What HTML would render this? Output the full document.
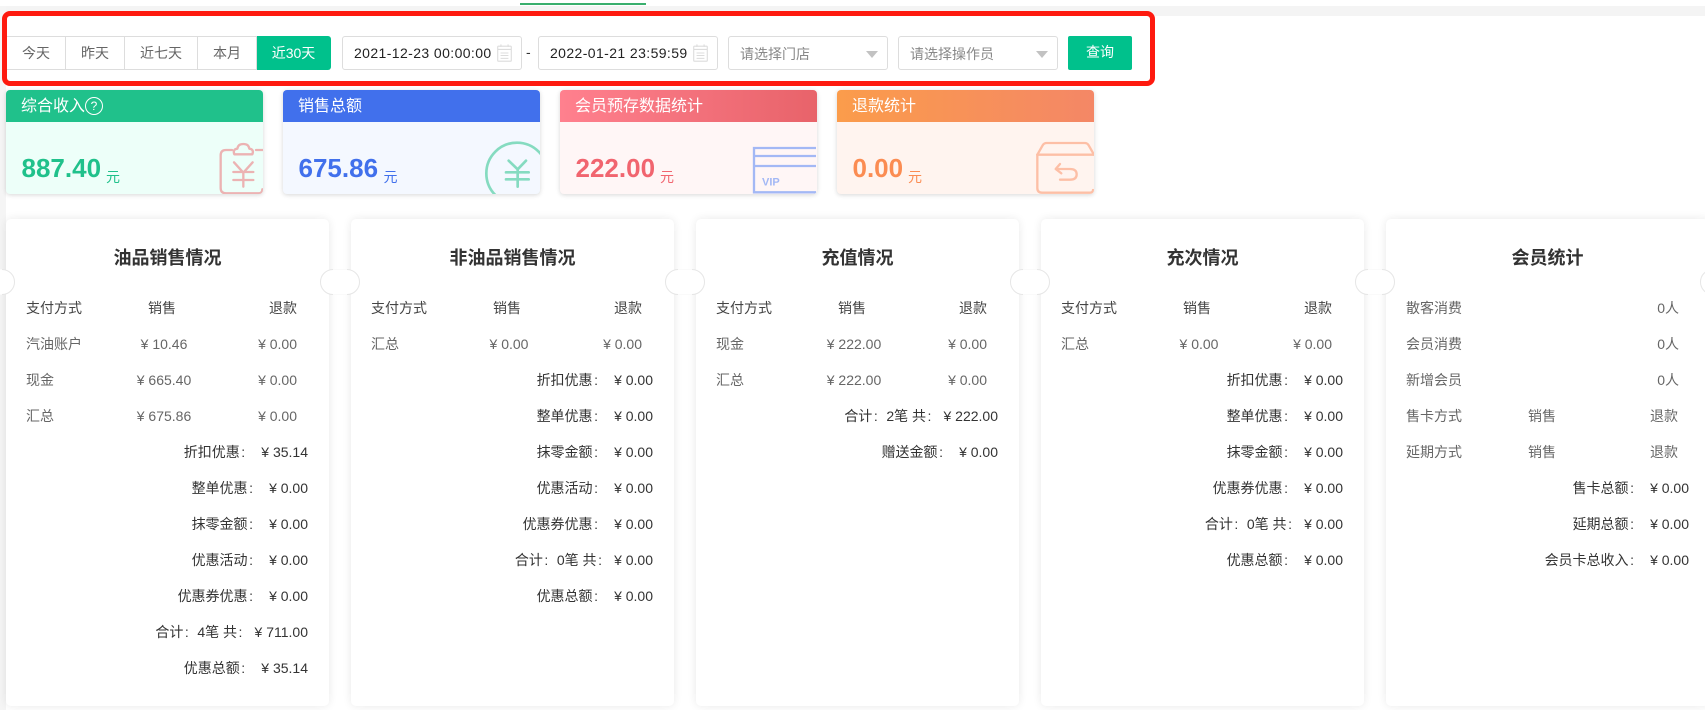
<!DOCTYPE html>
<html lang="zh-CN">
<head>
<meta charset="utf-8">
<title>统计</title>
<style>
html,body{margin:0;padding:0;background:#fff;}
body{position:relative;width:1705px;height:710px;overflow:hidden;font-family:"Liberation Sans","Noto Sans CJK SC",sans-serif;font-size:14px;color:#333;}
.abs,.stat,.card,.seg,.inp,.sel,.btn,.pill{position:absolute;box-sizing:border-box;}
.seg{top:36px;height:34px;line-height:32px;text-align:center;color:#666;background:#fff;border:1px solid #ddd;border-left:0;}
.seg.on{background:#00c18c;color:#fff;border-color:#00c18c;border-radius:0 3px 3px 0;}
.inp{top:36px;height:34px;width:180px;border:1px solid #ddd;border-radius:3px;background:#fff;line-height:32px;padding-left:11px;color:#222;letter-spacing:.4px;white-space:nowrap;}
.inp svg{position:absolute;right:9px;top:7px;width:15px;height:18px;}
.sel{top:36px;height:34px;width:160px;border:1px solid #ddd;border-radius:3px;background:#fff;line-height:34px;padding-left:11px;color:#888;}
.sel:after{content:"";position:absolute;right:9px;top:14px;width:0;height:0;border-left:6px solid transparent;border-right:6px solid transparent;border-top:7px solid #c2c2c2;}
.btn{left:1068px;top:36px;width:64px;height:34px;line-height:33px;text-align:center;background:#00c18c;color:#fff;border-radius:2px;}
.red{position:absolute;box-sizing:border-box;left:2px;top:11px;width:1153px;height:75px;border:5px solid #fe1a0f;border-radius:8px;background:transparent;}
.stat{top:90px;width:257px;height:104px;border-radius:4px;overflow:hidden;box-shadow:0 1px 5px rgba(0,0,0,.16);}
.stat .h{height:32px;line-height:34px;padding-left:15px;color:#fff;font-size:16px;white-space:nowrap;}
.stat .num{position:absolute;left:15.5px;top:63px;line-height:30px;font-size:26px;font-weight:bold;white-space:nowrap;}
.stat .yuan{position:absolute;top:80px;line-height:14px;font-size:14px;}
.stat svg{position:absolute;width:100px;height:70px;top:40px;}
.q{display:inline-block;box-sizing:border-box;width:18px;height:18px;border:1px solid #fff;border-radius:50%;font-size:12px;line-height:16px;text-align:center;vertical-align:1px;}
.card{top:219px;width:323px;height:487px;background:#fff;border-radius:5px;box-shadow:0 0 9px rgba(0,0,0,.09);}
.t{position:absolute;left:0;right:0;top:24px;line-height:30px;text-align:center;font-size:18px;font-weight:bold;color:#333;}
.rows{position:absolute;left:0;right:0;top:71px;}
.r{position:relative;height:36px;line-height:36px;white-space:nowrap;color:#666;}
.r span{position:absolute;}
.r .a{left:20px;}
.r .b2{left:95px;width:122px;text-align:center;}
.r .c{right:32px;}
.r.h3{color:#444;}
.r .v{left:97px;width:122px;text-align:center;}
.m{text-align:right;padding-right:21px;color:#333;}
.m i{display:inline-block;width:14px;padding-left:1.5px;box-sizing:border-box;text-align:left;font-style:normal;}
.m em{font-style:normal;margin-left:7.5px;}
.m em.n{margin-left:3.5px;}
.pill{top:269px;width:40px;height:26px;border:1px solid #e6e6e6;border-radius:13px;background:#fff;}
.pill:before,.pill:after{content:"";position:absolute;left:12px;width:14px;height:1px;background:rgba(255,255,255,.8);}
.pill:before{top:-1px;}
.pill:after{bottom:-1px;}
svg text{font-family:"Liberation Sans",sans-serif;font-weight:bold;}
</style>
</head>
<body>
<div class="abs" style="left:0;top:6px;width:1705px;height:10px;background:#f4f4f4"></div>
<div class="abs" style="left:0;top:6px;width:6px;height:704px;background:#f5f5f5"></div>
<div class="abs" style="left:520px;top:3px;width:126px;height:2px;background:#3aaf6e"></div>
<div class="abs" style="left:6px;top:16px;width:1150px;height:70px;background:#fff"></div>

<div class="seg" style="left:7px;width:59px">今天</div>
<div class="seg" style="left:66px;width:59px">昨天</div>
<div class="seg" style="left:125px;width:73px">近七天</div>
<div class="seg" style="left:198px;width:59px">本月</div>
<div class="seg on" style="left:257px;width:74px">近30天</div>

<div class="inp" style="left:342px">2021-12-23 00:00:00<svg viewBox="0 0 42 50"><g fill="none" stroke="#dcdcdc" stroke-width="3"><rect x="2" y="6" width="38" height="42" rx="2"/><path d="M11 1V8M31 1V8M2 15H40M10 25H32M10 32H32M10 40H32"/></g></svg></div>
<div class="abs" style="left:526px;top:36px;line-height:33px;color:#333">-</div>
<div class="inp" style="left:538px">2022-01-21 23:59:59<svg viewBox="0 0 42 50"><g fill="none" stroke="#dcdcdc" stroke-width="3"><rect x="2" y="6" width="38" height="42" rx="2"/><path d="M11 1V8M31 1V8M2 15H40M10 25H32M10 32H32M10 40H32"/></g></svg></div>
<div class="sel" style="left:728px">请选择门店</div>
<div class="sel" style="left:898px">请选择操作员</div>
<div class="btn">查询</div>
<div class="red"></div>

<div class="stat" style="left:6px;background:#edfff9">
  <div class="h" style="background:#20c18b">综合收入<span class="q">?</span></div>
  <div class="num" style="color:#20c18b">887.40</div>
  <div class="yuan" style="left:100px;color:#20c18b">元</div>
  <svg viewBox="0 0 300 210" style="left:194px"><g fill="none" stroke="#ecb3b3" stroke-width="7" stroke-linecap="round" stroke-linejoin="round"><path d="M96 60H78Q62 60 62 76V174Q62 190 78 190H176Q187 190 187 178"/><path d="M168 60H190"/><path d="M103 73Q97 58 112 56Q114 42 130 42Q146 42 148 56Q163 58 157 73Z"/><path d="M102 97L130 128L158 97M100 126H160M100 150H160M130 126V170"/></g></svg>
</div>
<div class="stat" style="left:283px;background:#f4f8ff">
  <div class="h" style="background:#4170ec">销售总额</div>
  <div class="num" style="color:#4170ec">675.86</div>
  <div class="yuan" style="left:100.5px;color:#4170ec">元</div>
  <svg viewBox="0 0 300 210" style="left:187px"><g fill="none" stroke="#85dbc0" stroke-width="8" stroke-linecap="round"><circle cx="141" cy="130" r="92"/><path d="M116 92L143 118L168 92M108 127H176M108 148H176M143 118V170"/></g></svg>
</div>
<div class="stat" style="left:560px;background:#fff6f6">
  <div class="h" style="background:linear-gradient(90deg,#ff808e,#e8636a)">会员预存数据统计</div>
  <div class="num" style="color:#f1656f">222.00</div>
  <div class="yuan" style="left:100px;color:#f1656f">元</div>
  <svg viewBox="0 0 300 210" style="left:180px"><g fill="none" stroke="#a3b8f5" stroke-width="7"><path d="M228 54H42V187H228M42 78H228M42 108H228"/></g><text x="66" y="167" font-size="33" fill="#a3b8f5">VIP</text></svg>
</div>
<div class="stat" style="left:837px;background:#fff4ef">
  <div class="h" style="background:linear-gradient(90deg,#fb9c4b,#f48766)">退款统计</div>
  <div class="num" style="color:#fb8c52">0.00</div>
  <div class="yuan" style="left:71px;color:#fb8c52">元</div>
  <svg viewBox="0 0 300 210" style="left:183px"><g fill="none" stroke="#fdbfa6" stroke-width="7" stroke-linecap="round" stroke-linejoin="round"><path d="M52 74L68 46Q72 39 80 39H194Q202 39 206 46L222 74"/><path d="M52 74H222"/><path d="M52 74V174Q52 188 66 188H210Q219 188 219 180"/><path d="M120 102L107 117L124 130M108 117H150Q170 117 170 133Q170 149 150 149H120"/></g></svg>
</div>

<div class="card" style="left:6px">
  <div class="t">油品销售情况</div>
  <div class="rows">
    <div class="r h3"><span class="a">支付方式</span><span class="b2">销售</span><span class="c">退款</span></div>
    <div class="r"><span class="a">汽油账户</span><span class="v">¥ 10.46</span><span class="c">¥ 0.00</span></div>
    <div class="r"><span class="a">现金</span><span class="v">¥ 665.40</span><span class="c">¥ 0.00</span></div>
    <div class="r"><span class="a">汇总</span><span class="v">¥ 675.86</span><span class="c">¥ 0.00</span></div>
    <div class="r m">折扣优惠<i>:</i><em>¥ 35.14</em></div>
    <div class="r m">整单优惠<i>:</i><em>¥ 0.00</em></div>
    <div class="r m">抹零金额<i>:</i><em>¥ 0.00</em></div>
    <div class="r m">优惠活动<i>:</i><em>¥ 0.00</em></div>
    <div class="r m">优惠券优惠<i>:</i><em>¥ 0.00</em></div>
    <div class="r m">合计<i>:</i>4笔 共<i>:</i><em class="n">¥ 711.00</em></div>
    <div class="r m">优惠总额<i>:</i><em>¥ 35.14</em></div>
  </div>
</div>
<div class="card" style="left:351px">
  <div class="t">非油品销售情况</div>
  <div class="rows">
    <div class="r h3"><span class="a">支付方式</span><span class="b2">销售</span><span class="c">退款</span></div>
    <div class="r"><span class="a">汇总</span><span class="v">¥ 0.00</span><span class="c">¥ 0.00</span></div>
    <div class="r m">折扣优惠<i>:</i><em>¥ 0.00</em></div>
    <div class="r m">整单优惠<i>:</i><em>¥ 0.00</em></div>
    <div class="r m">抹零金额<i>:</i><em>¥ 0.00</em></div>
    <div class="r m">优惠活动<i>:</i><em>¥ 0.00</em></div>
    <div class="r m">优惠券优惠<i>:</i><em>¥ 0.00</em></div>
    <div class="r m">合计<i>:</i>0笔 共<i>:</i><em class="n">¥ 0.00</em></div>
    <div class="r m">优惠总额<i>:</i><em>¥ 0.00</em></div>
  </div>
</div>
<div class="card" style="left:696px">
  <div class="t">充值情况</div>
  <div class="rows">
    <div class="r h3"><span class="a">支付方式</span><span class="b2">销售</span><span class="c">退款</span></div>
    <div class="r"><span class="a">现金</span><span class="v">¥ 222.00</span><span class="c">¥ 0.00</span></div>
    <div class="r"><span class="a">汇总</span><span class="v">¥ 222.00</span><span class="c">¥ 0.00</span></div>
    <div class="r m">合计<i>:</i>2笔 共<i>:</i><em class="n">¥ 222.00</em></div>
    <div class="r m">赠送金额<i>:</i><em>¥ 0.00</em></div>
  </div>
</div>
<div class="card" style="left:1041px">
  <div class="t">充次情况</div>
  <div class="rows">
    <div class="r h3"><span class="a">支付方式</span><span class="b2">销售</span><span class="c">退款</span></div>
    <div class="r"><span class="a">汇总</span><span class="v">¥ 0.00</span><span class="c">¥ 0.00</span></div>
    <div class="r m">折扣优惠<i>:</i><em>¥ 0.00</em></div>
    <div class="r m">整单优惠<i>:</i><em>¥ 0.00</em></div>
    <div class="r m">抹零金额<i>:</i><em>¥ 0.00</em></div>
    <div class="r m">优惠券优惠<i>:</i><em>¥ 0.00</em></div>
    <div class="r m">合计<i>:</i>0笔 共<i>:</i><em class="n">¥ 0.00</em></div>
    <div class="r m">优惠总额<i>:</i><em>¥ 0.00</em></div>
  </div>
</div>
<div class="card" style="left:1386px">
  <div class="t">会员统计</div>
  <div class="rows">
    <div class="r"><span class="a">散客消费</span><span class="c" style="right:30px">0人</span></div>
    <div class="r"><span class="a">会员消费</span><span class="c" style="right:30px">0人</span></div>
    <div class="r"><span class="a">新增会员</span><span class="c" style="right:30px">0人</span></div>
    <div class="r"><span class="a">售卡方式</span><span class="b2">销售</span><span class="c" style="right:31px">退款</span></div>
    <div class="r"><span class="a">延期方式</span><span class="b2">销售</span><span class="c" style="right:31px">退款</span></div>
    <div class="r m" style="padding-right:20px">售卡总额<i>:</i><em>¥ 0.00</em></div>
    <div class="r m" style="padding-right:20px">延期总额<i>:</i><em>¥ 0.00</em></div>
    <div class="r m" style="padding-right:20px">会员卡总收入<i>:</i><em>¥ 0.00</em></div>
  </div>
</div>

<div class="pill" style="left:-25px"></div>
<div class="pill" style="left:320px"></div>
<div class="pill" style="left:665px"></div>
<div class="pill" style="left:1010px"></div>
<div class="pill" style="left:1355px"></div>
<div class="pill" style="left:1700px"></div>
</body>
</html>
